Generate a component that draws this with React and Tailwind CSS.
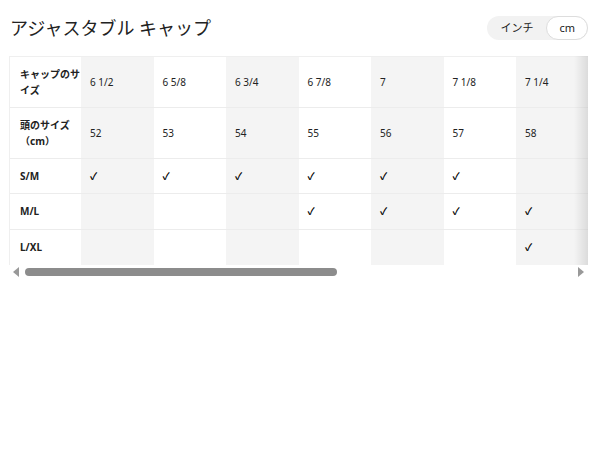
import React from 'react';

const caps = ['6 1/2', '6 5/8', '6 3/4', '6 7/8', '7', '7 1/8', '7 1/4', '7 3/8', '7 1/2', '7 5/8', '7 3/4', '7 7/8', '8'];
const heads = [52, 53, 54, 55, 56, 57, 58, 59, 60, 61, 62, 63, 64];

// which columns each fit covers
const fits = [
    { name: 'S/M', from: 0, to: 5 },
    { name: 'M/L', from: 3, to: 8 },
    { name: 'L/XL', from: 6, to: 12 },
];

export default function App() {
    const [unit, setUnit] = React.useState('cm');

    const cellBg = (i) => (i % 2 === 0 ? 'bg-[#f4f4f4]' : 'bg-white');

    return (
        <div className="min-h-screen bg-white px-[9px] pt-[14px] text-[#222]" style={{ fontFamily: '"Noto Sans", "Noto Sans CJK JP", sans-serif' }}>
            <div className="flex items-center justify-between h-[28px] pr-[3px]">
                <h1 className="text-[18px] leading-[24px] font-normal pl-[1px]">アジャスタブル キャップ</h1>
                <div className="flex items-center h-[24px] rounded-full bg-[#f2f2f2] text-[11px]">
                    <button
                        onClick={() => setUnit('in')}
                        className={`h-[24px] px-[13px] rounded-full ${unit === 'in' ? 'bg-white border border-[#ddd]' : ''}`}
                    >
                        インチ
                    </button>
                    <button
                        onClick={() => setUnit('cm')}
                        className={`h-[24px] px-[12px] rounded-full ${unit === 'cm' ? 'bg-white border border-[#ddd]' : ''}`}
                    >
                        cm
                    </button>
                </div>
            </div>

            <div className="relative mt-[14px] w-[579px]">
                <div className="overflow-x-auto [scrollbar-width:none] border-t border-l border-[#efefef]">
                    <table className="table-fixed border-collapse w-[1013.5px] text-[10px] leading-[16px]">
                        <colgroup>
                            <col className="w-[71px]" />
                            {caps.map((c) => (
                                <col key={c} className="w-[72.5px]" />
                            ))}
                        </colgroup>
                        <tbody>
                            <tr className="border-b border-[#ececec]">
                                <th className="text-left font-bold pl-[10px] pr-0 h-[50.5px] align-middle">キャップのサイズ</th>
                                {caps.map((c, i) => (
                                    <td key={c} className={`px-[9px] ${cellBg(i)}`}>{c}</td>
                                ))}
                            </tr>
                            <tr className="border-b border-[#ececec]">
                                <th className="text-left font-bold pl-[10px] pr-0 h-[50.5px] align-middle">頭のサイズ（cm）</th>
                                {heads.map((h, i) => (
                                    <td key={h} className={`px-[9px] ${cellBg(i)}`}>{unit === 'cm' ? h : (h / 2.54).toFixed(1)}</td>
                                ))}
                            </tr>
                            {fits.map((f, r) => (
                                <tr key={f.name} className={r < fits.length - 1 ? 'border-b border-[#ececec]' : ''}>
                                    <th className="text-left font-bold pl-[10px] h-[35.5px] align-middle">{f.name}</th>
                                    {caps.map((c, i) => (
                                        <td key={c} className={`px-[9px] font-bold text-black ${cellBg(i)}`}>{i >= f.from && i <= f.to ? '✓' : ''}</td>
                                    ))}
                                </tr>
                            ))}
                        </tbody>
                    </table>
                </div>
                {/* horizontal scrollbar */}
                <div className="flex items-center h-[13px] bg-white pt-[1px]">
                    <div className="w-[14px] flex justify-center">
                        <div className="w-0 h-0 border-y-[5px] border-y-transparent border-r-[6px] border-r-[#999]" />
                    </div>
                    <div className="flex-1 px-[2px]">
                        <div className="h-[8px] w-[312px] rounded-full bg-[#8c8c8c]" />
                    </div>
                    <div className="w-[14px] flex justify-center">
                        <div className="w-0 h-0 border-y-[5px] border-y-transparent border-l-[6px] border-l-[#999]" />
                    </div>
                </div>
                {/* fade on the right edge, shows there is more to scroll */}
                <div className="pointer-events-none absolute right-0 top-0 bottom-[13px] w-[14px] bg-gradient-to-l from-black/10 to-transparent" />
            </div>
        </div>
    );
}
